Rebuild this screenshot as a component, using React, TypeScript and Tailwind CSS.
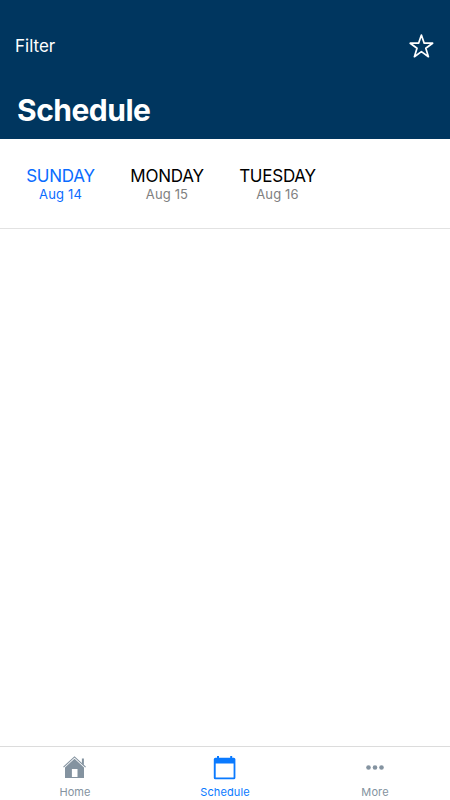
import type { ReactNode } from "react";
import clsx from "clsx";

interface Day {
  name: string;
  date: string;
  width: string;
}

const days: Day[] = [
  { name: "SUNDAY", date: "Aug 14", width: "w-[69px]" },
  { name: "MONDAY", date: "Aug 15", width: "w-[74px]" },
  { name: "TUESDAY", date: "Aug 16", width: "w-[77px]" },
];

const HomeIcon = () => (
  <svg width="24" height="24" viewBox="0 0 24 24" fill="currentColor">
    <path d="M0.5 11.1 11.5 0.9 22.6 11.1" fill="none" stroke="currentColor" strokeWidth="1.1" />
    <path d="M18.9 2.4h2v6.8l-2-1.8z" />
    <path fillRule="evenodd" d="M11.5 2.7 21 11.4v10.5H2V11.4zM8.9 13v8h5.6v-8z" />
  </svg>
);

const CalendarIcon = () => (
  <svg width="24" height="24" viewBox="0 0 24 24" fill="currentColor">
    <path fillRule="evenodd" d="M2.4 1.7H4V0h2v1.7h11.2V0h2v1.7h1.6a1.6 1.6 0 0 1 1.6 1.6v18.4a1.6 1.6 0 0 1-1.6 1.6H2.4a1.6 1.6 0 0 1-1.6-1.6V3.3a1.6 1.6 0 0 1 1.6-1.6zM2.7 7.4v14.1h17.9V7.4z" />
  </svg>
);

const MoreIcon = () => (
  <svg width="24" height="24" viewBox="0 0 24 24" fill="currentColor">
    <circle cx="5.5" cy="11.5" r="2.3" />
    <circle cx="12" cy="11.5" r="2.3" />
    <circle cx="18.5" cy="11.5" r="2.3" />
  </svg>
);

interface TabProps {
  label: string;
  active?: boolean;
  children: ReactNode;
}

const Tab = ({ label, active, children }: TabProps) => (
  <button className={clsx("flex flex-1 flex-col items-center pt-[9px]", active ? "text-[#0a7aff]" : "text-[#8493a0]")}>
    {children}
    <span className="mt-1 text-[11px] leading-4 tracking-[0.1px]">{label}</span>
  </button>
);

export default function App() {
  return (
    <div className="flex h-screen flex-col bg-white font-['Inter',sans-serif]">
      <header className="h-[139px] bg-[#00365f] text-white">
        <div className="flex items-center justify-between pt-[33px] pr-4 pl-[15px]">
          <button className="text-[17px] leading-6">Filter</button>
          <svg width="26" height="26" viewBox="0 0 26 26" fill="none" stroke="currentColor" strokeWidth="1.7" strokeLinejoin="round">
            <path d="M13.4 2 16.2 10.2h8.4l-6.8 5.1 2.6 8.4-7-5.1-7 5.1 2.6-8.4-6.8-5.1h8.4z" />
          </svg>
        </div>
        <h1 className="mt-[31px] pl-[17px] text-[30px] leading-10 font-bold tracking-[-0.5px]">Schedule</h1>
      </header>

      <nav className="flex h-[90px] gap-[35px] border-b border-[#e2e2e2] pt-[27px] pl-[26px]">
        {days.map((day, i) => (
          <button
            key={day.name}
            className={clsx("flex flex-col items-center whitespace-nowrap", day.width, i === 0 ? "text-[#0a6cff]" : "text-black")}
          >
            <span className="text-[17px] leading-5 tracking-[-0.25px]">{day.name}</span>
            <span className={clsx("text-[13px] leading-4 tracking-[0.15px]", i !== 0 && "text-[#808080]")}>
              {day.date}
            </span>
          </button>
        ))}
      </nav>

      <main className="flex-1" />

      <footer className="flex h-[54px] items-start border-t border-[#dcdcdc]">
        <Tab label="Home">
          <HomeIcon />
        </Tab>
        <Tab label="Schedule" active>
          <CalendarIcon />
        </Tab>
        <Tab label="More">
          <MoreIcon />
        </Tab>
      </footer>
    </div>
  );
}
